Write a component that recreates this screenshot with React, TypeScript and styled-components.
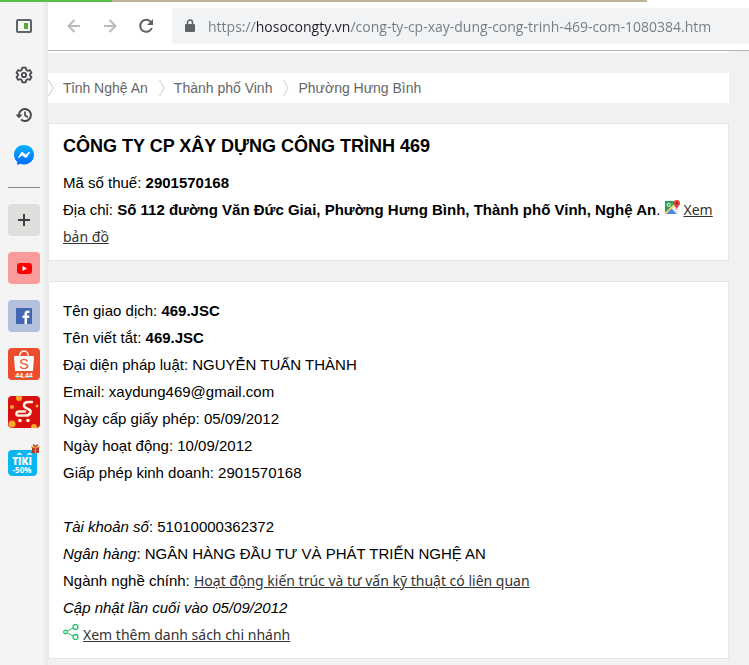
import React from "react";
import styled, { createGlobalStyle } from "styled-components";

const GlobalStyle = createGlobalStyle`
  *, *::before, *::after { box-sizing: border-box; }
  body {
    margin: 0;
    background: #f1f1f1;
    color: #000;
    font-family: "Liberation Sans", Arial, sans-serif;
    font-size: 15px;
    line-height: 27px;
  }
  button { font: inherit; color: inherit; border: 0; padding: 0; background: none; cursor: pointer; }
  svg { display: block; }
`;

const Window = styled.div`
  display: flex;
  flex-direction: column;
  min-height: 100vh;
`;

const TabStrip = styled.div`
  display: grid;
  grid-template-columns: 112px 1fr 102px;
  height: 2px;
  background: #fff;
`;

const StripPart = styled.div<{ $color: string }>`
  background: ${(p) => p.$color};
`;

const Body = styled.div`
  display: flex;
  flex: 1;
`;

const Sidebar = styled.nav`
  display: flex;
  flex-direction: column;
  align-items: center;
  flex: none;
  width: 48px;
  background: linear-gradient(to right, #f4f4f4 42px, #e9e9e9 48px);
`;

const ToolButton = styled.button<{ $tall?: boolean }>`
  display: flex;
  align-items: center;
  justify-content: center;
  width: 40px;
  height: ${(p) => (p.$tall ? 48 : 40)}px;
  margin-bottom: ${(p) => (p.$tall ? 5 : 0)}px;
`;

const Divider = styled.hr`
  width: 32px;
  height: 1px;
  margin: 12px 0 16px;
  border: 0;
  background: #858585;
`;

const Shortcuts = styled.div`
  display: flex;
  flex-direction: column;
  gap: 16px;
`;

const Tile = styled.button<{ $bg?: string }>`
  display: flex;
  align-items: center;
  justify-content: center;
  width: 32px;
  height: 32px;
  border-radius: 4px;
  background: ${(p) => p.$bg ?? "transparent"};
  overflow: hidden;
`;

const Content = styled.div`
  flex: 1;
  min-width: 0;
`;

const Toolbar = styled.header`
  display: flex;
  align-items: center;
  height: 49px;
  padding-left: 8px;
  background: #fff;
  border-bottom: 1px solid #b3b4b5;
`;

const NavButton = styled.button`
  display: flex;
  align-items: center;
  justify-content: center;
  width: 36px;
  height: 36px;
`;

const AddressBar = styled.label`
  display: flex;
  align-items: center;
  flex: 1;
  min-width: 0;
  height: 36px;
  margin-left: 8px;
  padding-left: 12px;
  gap: 12px;
  border-radius: 4px 0 0 4px;
  background: #f1f3f4;
`;

const AddressInput = styled.input`
  flex: 1;
  min-width: 0;
  height: 28px;
  padding: 0;
  border: 0;
  outline: 0;
  font: 14px/20px "Open Sans", sans-serif;
  color: transparent;
  background: linear-gradient(to right, #757a80 47px, #202124 47px, #202124 142px, #757a80 142px);
  background-clip: text;
  -webkit-background-clip: text;
`;

const Page = styled.main`
  padding: 0 20px 6px 0;
`;

const HeaderEdge = styled.div`
  height: 2px;
  margin-bottom: 20px;
  background: #fff;
`;

const Breadcrumb = styled.ol`
  display: flex;
  margin: 0 0 20px;
  padding: 0;
  list-style: none;
  background: #fff;
  height: 30px;
  font-size: 14px;
  line-height: 30px;
`;

const Crumb = styled.li`
  display: flex;
  align-items: center;
  gap: 9px;
  margin-right: 11px;
`;

const CrumbLink = styled.a`
  color: #666;
  text-decoration: none;
`;

const Card = styled.section<{ $top: number }>`
  margin-bottom: 20px;
  padding: ${(p) => p.$top}px 14px 10px;
  background: #fff;
  border: 1px solid #e6e6e6;
  &:last-child { margin-bottom: 0; }
`;

const Title = styled.h1`
  margin: 0 0 9px;
  font-size: 18px;
  line-height: 27px;
`;

const Row = styled.div`
  min-height: 27px;
`;

const TextLink = styled.a`
  color: #333;
  font-family: "Noto Sans", sans-serif;
  font-size: 14px;
  text-decoration: underline;
`;

const InlineIcon = styled.span`
  display: inline-block;
  margin-right: 4px;
`;

const Chevron = () => (
  <svg width="6" height="18" viewBox="0 0 6 18" fill="none" stroke="#ccc">
    <path d="M0.5 1 5.2 9 0.5 17" />
  </svg>
);

const crumbs = ["Tỉnh Nghệ An", "Thành phố Vinh", "Phường Hưng Bình"];

export default function App() {
  return (
    <Window>
      <GlobalStyle />
      <TabStrip>
        <StripPart $color="#5bbd4a" />
        <StripPart $color="#c0b49d" />
      </TabStrip>
      <Body>
        <Sidebar aria-label="Thanh bên">
          <ToolButton $tall aria-label="Bảng điều khiển">
            <svg width="16" height="14" viewBox="0 0 16 14">
              <rect x="1" y="1" width="14" height="12" rx="1" fill="#f8f8f8" stroke="#5f6368" strokeWidth="2" />
              <rect x="8" y="4" width="4" height="6" fill="#56ad36" />
            </svg>
          </ToolButton>
          <ToolButton aria-label="Cài đặt">
            <svg width="18" height="18" viewBox="0 0 18 18" fill="none" stroke="#474a4d" strokeWidth="1.800" strokeLinejoin="round">
              <path d="M7.300 1.700h3.400l.5 2.200 1.500.9 2.200-.7 1.600 2.800L14.900 8.400v1.200l1.600 1.500-1.600 2.800-2.200-.7-1.500.9-.5 2.200H7.300l-.5-2.200-1.500-.9-2.200.7-1.600-2.800 1.600-1.500V8.400L1.500 6.900l1.600-2.800 2.200.7 1.500-.9z" />
              <circle cx="9" cy="9" r="2.200" />
            </svg>
          </ToolButton>
          <ToolButton aria-label="Lịch sử">
            <svg width="18" height="16" viewBox="0 0 18 16" fill="none" stroke="#474a4d" strokeWidth="2">
              <path d="M4 8a6 6 0 1 1 2 4.500" />
              <path d="M10 4.500v4l3 1.700" strokeWidth="1.700" />
              <path d="M0.500 7.500h7L4 11.200z" fill="#474a4d" stroke="none" />
            </svg>
          </ToolButton>
          <ToolButton aria-label="Messenger">
            <svg width="20" height="20" viewBox="0 0 20 20">
              <defs>
                <linearGradient id="msg" x1="0" y1="0" x2="0" y2="1">
                  <stop offset="0" stopColor="#00b2ff" />
                  <stop offset="1" stopColor="#006aff" />
                </linearGradient>
              </defs>
              <path fill="url(#msg)" d="M10 0C4.300 0 0 4.100 0 9.700c0 2.900 1.200 5.400 3.200 7.100V20l3-1.200c1.200.4 2.500.6 3.800.6 5.700 0 10-4.100 10-9.700S15.700 0 10 0" />
              <path fill="#fff" d="m4 12.500 2.900-4.700c.5-.7 1.500-.9 2.200-.4l2.300 1.800c.2.200.5.200.7 0l3.200-2.400c.4-.3.900.2.700.6l-2.900 4.700c-.5.7-1.500.9-2.200.4l-2.300-1.800c-.2-.2-.5-.2-.7 0l-3.200 2.400c-.4.3-.9-.2-.7-.6" />
            </svg>
          </ToolButton>
          <Divider />
          <Shortcuts>
            <Tile $bg="#dededa" aria-label="Thêm">
              <svg width="12" height="12" viewBox="0 0 12 12" stroke="#3c4043" strokeWidth="2">
                <path d="M6 0v12M0 6h12" />
              </svg>
            </Tile>
            <Tile $bg="#fa9b9b" aria-label="YouTube">
              <svg width="15" height="11" viewBox="0 0 15 11">
                <rect width="15" height="11" rx="3" fill="#f00" />
                <path d="M5.500 3v5l4.500-2.500z" fill="#fff" />
              </svg>
            </Tile>
            <Tile $bg="#b3c1de" aria-label="Facebook">
              <svg width="16" height="16" viewBox="0 0 16 16">
                <rect width="16" height="16" rx="1" fill="#4267b2" />
                <path fill="#fff" d="M8.500 16v-6H6.500V7.500h2V5.800C8.500 3.700 9.800 2.600 11.600 2.600c.9 0 1.600.1 1.900.1v2.200h-1.300c-1 0-1.200.5-1.200 1.200v1.400h2.400l-.3 2.500h-2.100v6z" />
              </svg>
            </Tile>
            <Tile $bg="#ee4d2d" aria-label="Shopee">
              <svg width="32" height="32" viewBox="0 0 32 32">
                <path d="M11.500 9c0-8 9-8 9 0" fill="none" stroke="#fff" strokeWidth="1.400" />
                <path d="M6 8h20l-1 15H7z" fill="#fff" />
                <text x="16" y="21" textAnchor="middle" fontFamily="Liberation Sans" fontSize="15" fill="#ee4d2d">S</text>
                <text x="16" y="30" textAnchor="middle" fontFamily="Liberation Sans" fontWeight="700" fontSize="7" fill="#fff">44.44</text>
                <path d="M8 29.500h4m8 0h4" stroke="#33a3c0" />
              </svg>
            </Tile>
            <Tile $bg="#d9100f" aria-label="Sendo">
              <svg width="32" height="32" viewBox="0 0 32 32">
                <g fill="#f7a928">
                  <circle cx="11" cy="2" r="3" />
                  <circle cx="4" cy="11" r="2" />
                  <circle cx="29" cy="10" r="1.500" />
                  <circle cx="4" cy="28" r="3.500" />
                  <circle cx="26" cy="31" r="3" />
                </g>
                <path d="M24 6h-3.500c-3 0-4.500 1.500-4.500 3.500s1.500 2.500 4 3.500 3 2 2.500 3.500-2 3-4.500 3H10c-2.500 0-2-4 1-4h6" fill="none" stroke="#fff3df" strokeWidth="2.600" strokeLinecap="round" />
                <circle cx="12" cy="24.500" r="1.800" fill="#fff3df" />
                <circle cx="20" cy="24.500" r="1.800" fill="#fff3df" />
              </svg>
            </Tile>
            <Tile aria-label="Tiki">
              <svg width="32" height="32" viewBox="0 0 32 32">
                <rect y="6" width="29" height="26" rx="4" fill="#0db5f0" />
                <path d="M9.500 11q2-3 4 0M19.500 11q2-3 4 0" fill="none" stroke="#fff" strokeWidth="1.300" />
                <text x="14" y="21" textAnchor="middle" fontFamily="Open Sans" fontWeight="800" fontSize="10" fill="#fff">TIKI</text>
                <text x="14" y="29" textAnchor="middle" fontFamily="Open Sans" fontWeight="700" fontSize="8" fill="#fff">-50%</text>
                <rect x="24" y="3" width="7" height="6" fill="#b73a2b" />
                <path d="M23 3h9M27.500 2v7" stroke="#e9a33b" strokeWidth="1.300" />
                <path d="M27.500 2.500 25 .6m2.500 1.900L30 .6" stroke="#b73a2b" strokeWidth="1.300" />
              </svg>
            </Tile>
          </Shortcuts>
        </Sidebar>
        <Content>
          <Toolbar>
            <NavButton aria-label="Quay lại">
              <svg width="14" height="14" viewBox="0 0 14 14" fill="none" stroke="#b9bbbd" strokeWidth="2">
                <path d="M13 7H1.500M7.500 1l-6 6 6 6" />
              </svg>
            </NavButton>
            <NavButton aria-label="Tiến tới">
              <svg width="14" height="14" viewBox="0 0 14 14" fill="none" stroke="#b9bbbd" strokeWidth="2">
                <path d="M1 7h11.500M6.500 1l6 6-6 6" />
              </svg>
            </NavButton>
            <NavButton aria-label="Tải lại">
              <svg width="16" height="16" viewBox="0 0 16 16">
                <path d="M13 4.200A6 6 0 1 0 13.800 10" fill="none" stroke="#5f6368" strokeWidth="2" />
                <path d="M15 1v6H9z" fill="#5f6368" />
              </svg>
            </NavButton>
            <AddressBar>
              <svg width="12" height="14" viewBox="0 0 12 14">
                <rect x="1" y="5" width="10" height="8" rx="1" fill="#5f6368" />
                <path d="M3.500 6V3.500a2.500 2.500 0 0 1 5 0V6" fill="none" stroke="#5f6368" strokeWidth="1.500" />
              </svg>
              <AddressInput
                type="text"
                aria-label="Địa chỉ trang"
                defaultValue="https://hosocongty.vn/cong-ty-cp-xay-dung-cong-trinh-469-com-1080384.htm"
              />
            </AddressBar>
          </Toolbar>
          <Page>
            <HeaderEdge />
            <Breadcrumb>
              {crumbs.map((name) => (
                <Crumb key={name}>
                  <Chevron />
                  <CrumbLink href="#">{name}</CrumbLink>
                </Crumb>
              ))}
            </Breadcrumb>
            <Card $top={9}>
              <Title>CÔNG TY CP XÂY DỰNG CÔNG TRÌNH 469</Title>
              <Row>Mã số thuế: <b>2901570168</b></Row>
              <Row>
                Địa chỉ: <b>Số 112 đường Văn Đức Giai, Phường Hưng Bình, Thành phố Vinh, Nghệ An</b>.{" "}
                <InlineIcon>
                  <svg width="15" height="15" viewBox="0 0 14 14">
                    <path d="M0 1h12v12H0z" fill="#e8e8e8" />
                    <path d="M0 1h9v4L0 12z" fill="#2f9e58" />
                    <path d="M1 13l5-5 5 5z" fill="#4a86e8" />
                    <path d="M0 13 9 4" stroke="#f5d15b" strokeWidth="1.500" />
                    <circle cx="3.500" cy="4.500" r="1.500" fill="none" stroke="#d8f0df" />
                    <path d="M11 0a3 3 0 0 1 3 3c0 2.500-2.500 3-3 6-.5-3-3-3.500-3-6a3 3 0 0 1 3-3" fill="#db4437" />
                    <circle cx="11" cy="3" r="1" fill="#7b231c" />
                  </svg>
                </InlineIcon>
                <TextLink href="#">Xem bản đồ</TextLink>
              </Row>
            </Card>
            <Card $top={15}>
              <Row>Tên giao dịch: <b>469.JSC</b></Row>
              <Row>Tên viết tắt: <b>469.JSC</b></Row>
              <Row>Đại diện pháp luật: NGUYỄN TUẤN THÀNH</Row>
              <Row>Email: xaydung469@gmail.com</Row>
              <Row>Ngày cấp giấy phép: 05/09/2012</Row>
              <Row>Ngày hoạt động: 10/09/2012</Row>
              <Row>Giấp phép kinh doanh: 2901570168</Row>
              <Row />
              <Row><i>Tài khoản số</i>: 51010000362372</Row>
              <Row><i>Ngân hàng</i>: NGÂN HÀNG ĐẦU TƯ VÀ PHÁT TRIỂN NGHỆ AN</Row>
              <Row>Ngành nghề chính: <TextLink href="#">Hoạt động kiến trúc và tư vấn kỹ thuật có liên quan</TextLink></Row>
              <Row><i>Cập nhật lần cuối vào 05/09/2012</i></Row>
              <Row>
                <InlineIcon>
                  <svg width="16" height="16" viewBox="0 0 16 16" fill="none" stroke="#2dbd6b" strokeWidth="1.300">
                    <circle cx="2.500" cy="8" r="1.800" />
                    <circle cx="12.500" cy="3" r="2.500" />
                    <circle cx="12.500" cy="13" r="2.500" />
                    <path d="m4.200 7.200 6-3.200M4.200 8.800l6 3.200" strokeWidth="1" />
                  </svg>
                </InlineIcon>
                <TextLink href="#">Xem thêm danh sách chi nhánh</TextLink>
              </Row>
            </Card>
          </Page>
        </Content>
      </Body>
    </Window>
  );
}
